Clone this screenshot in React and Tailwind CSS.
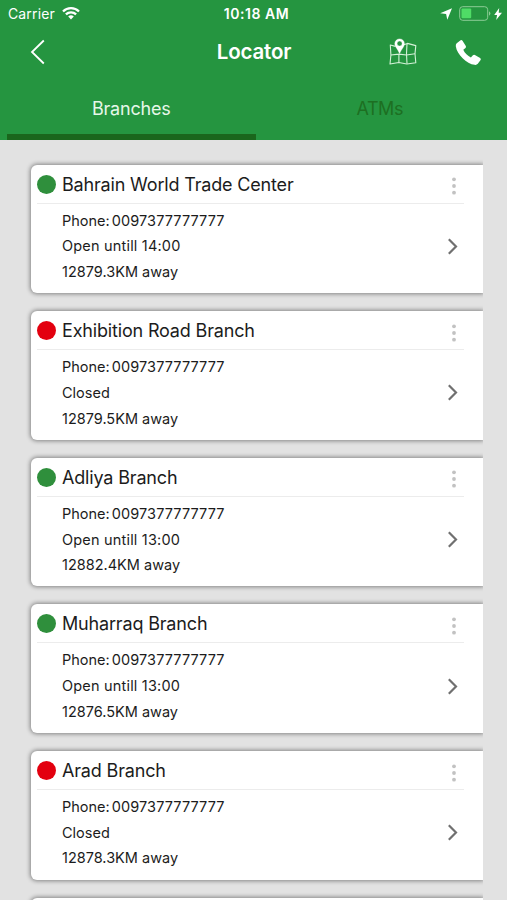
import React from 'react';

const branches = [
    { name: 'Bahrain World Trade Center', phone: '0097377777777', status: 'Open untill 14:00', distance: '12879.3KM away', open: true },
    { name: 'Exhibition Road Branch', phone: '0097377777777', status: 'Closed', distance: '12879.5KM away', open: false },
    { name: 'Adliya Branch', phone: '0097377777777', status: 'Open untill 13:00', distance: '12882.4KM away', open: true },
    { name: 'Muharraq Branch', phone: '0097377777777', status: 'Open untill 13:00', distance: '12876.5KM away', open: true },
    { name: 'Arad Branch', phone: '0097377777777', status: 'Closed', distance: '12878.3KM away', open: false },
];

const WifiIcon = () => (
    <svg className="w-[18px] h-[13px] -mt-[2px]" viewBox="0 0 18 13" fill="none" stroke="white" strokeWidth="2.3">
        <path d="M1 4.5a11.4 11.4 0 0 1 16 0" />
        <path d="M3.9 7.4a7.2 7.2 0 0 1 10.2 0" />
        <path d="M9 12.4 6.2 9.6a4 4 0 0 1 5.6 0Z" fill="white" stroke="none" />
    </svg>
);

const MapIcon = () => (
    <svg className="w-[28px] h-[28px]" viewBox="0 0 28 28" fill="none" stroke="#d5f2d8" strokeWidth="1.1" strokeLinejoin="round">
        <path d="M6.500 8.400 1.300 7l.6 10-.9 9 8.800-1.500 8 1.500 9-1.200-.8-9 .8-8.200-8.400-2.200-3.600 1.300" />
        <path d="M9.900 15.500v9M18 5.800l-.5 10 .5 10M1.900 17l8-.9 7.600.9 8.500-1.200" />
        <path d="M10.600.9a4.800 4.800 0 0 0-4.800 4.800c0 3.200 3.300 5.700 4.800 9.900 1.500-4.200 4.800-6.700 4.800-9.900A4.800 4.800 0 0 0 10.600.9Zm0 2.200a2.500 2.500 0 1 1 0 5 2.500 2.500 0 0 1 0-5Z" fill="white" fillRule="evenodd" stroke="white" strokeWidth="0.4" />
    </svg>
);

const StatusBar = () => (
    <div className="grid grid-cols-3 items-center h-7 pl-[8px] pr-[5px] text-white">
        <div className="flex items-center gap-[7px]">
            <span className="text-[14px] tracking-[0.14px] -mt-px">Carrier</span>
            <WifiIcon />
        </div>
        <span className="text-center text-[14px] font-semibold tracking-[0.55px] pl-[3px] -mt-px whitespace-nowrap">10:18 AM</span>
        <div className="flex items-center justify-end -mt-px">
            <svg className="w-[12px] h-[12px] mr-[7px]" viewBox="0 0 12 12" fill="white">
                <path d="M12 .3 7.300 11.700 6.100 6.100.2 5.300Z" />
            </svg>
            <svg className="w-[32px] h-[15px] mr-[3px]" viewBox="0 0 32 15" fill="none">
                <rect x="0.7" y="0.7" width="28" height="13.6" rx="3" stroke="#8dcc96" strokeWidth="1" />
                <rect x="2.5" y="2.6" width="9.7" height="9.6" rx="1" fill="#4fdc66" />
                <path d="M30 5.2a2.600 2.600 0 0 1 0 4.600Z" fill="#8dcc96" />
            </svg>
            <svg className="w-[8px] h-[12px]" viewBox="0 0 8 12" fill="white">
                <path d="M5.200 0 .2 6.900h2.900L2.200 12 8 4.700H4.700Z" />
            </svg>
        </div>
    </div>
);

const Header = () => (
    <header className="h-[140px] bg-[#259540] flex flex-col">
        <StatusBar />
        <div className="grid grid-cols-3 items-center h-[48px] pl-[30px] pr-[25px] text-white">
            <svg className="w-[15px] h-[26px]" viewBox="0 0 15 26" fill="none" stroke="white" strokeWidth="1.8">
                <path d="M13.8 1.500 2 13l11.800 11.500" />
            </svg>
            <h1 className="text-center text-[20.5px] font-semibold tracking-[-0.15px] pr-[4px]">Locator</h1>
            <div className="flex items-center justify-end gap-[38px]">
                <MapIcon />
                <svg className="w-[27px] h-[27px]" viewBox="0 0 27 27" fill="white">
                    <path d="M1.700 4.200 5.600 1.300Q6.700.7 7.500 1.700l3.300 5.200q.6 1.100-.3 2l-2.200 1.900c1.400 3.300 4.400 6.200 7.600 7.700l2-2.300q.9-.9 2-.3l5.200 3.200q1.200.8.500 2l-2.800 3.700q-1.300 1.400-3.200 1C11.800 25 1.900 15.500.8 7.200q-.2-1.900.9-3Z" />
                </svg>
            </div>
        </div>
        <nav className="grid grid-cols-2 flex-1 px-[7px] text-[18px] text-center">
            <div className="flex flex-col justify-between pt-[19px] text-[#e6f7e8]">
                <span className="leading-[27px] pl-[2px] tracking-[-0.2px]">Branches</span>
                <div className="h-[6px] w-[249px] bg-[#1a661c]" />
            </div>
            <div className="pt-[19px] text-[#1d6f22]">
                <span className="leading-[27px] pl-[6px] tracking-[-0.4px]">ATMs</span>
            </div>
        </nav>
    </header>
);

const BranchCard = ({ branch }) => (
    <article className="shrink-0 h-[128.6px] bg-white rounded-l-[6px] shadow-[0_0_4px_1px_rgba(0,0,0,0.42)] text-[#1c1c1c]">
        {branch && (
            <>
                <div className="flex items-center h-[39px] ml-[6px] mr-[19px] pt-px border-b border-[#ececec]">
                    <span className={`w-[19px] h-[19px] rounded-full ${branch.open ? 'bg-[#2f8f3c]' : 'bg-[#e3000f]'}`} />
                    <h2 className="flex-1 ml-[6px] text-[18px] tracking-[-0.17px] whitespace-nowrap">{branch.name}</h2>
                    <svg className="w-[4px] h-[18px] mr-[8px] mt-[4px]" viewBox="0 0 4 18" fill="#c2c2c2">
                        <circle cx="2" cy="2.3" r="1.9" />
                        <circle cx="2" cy="9" r="1.9" />
                        <circle cx="2" cy="15.7" r="1.9" />
                    </svg>
                </div>
                <div className="flex items-center justify-between pl-[31px] pr-[25px] pt-[4px]">
                    <div className="text-[14.5px] leading-[25.7px]">
                        <p className="flex gap-[2px]">
                            <span>Phone:</span>
                            <span className="tracking-[0.1px]">{branch.phone}</span>
                        </p>
                        <p className={branch.open ? 'tracking-[0.19px]' : ''}>{branch.status}</p>
                        <p>{branch.distance}</p>
                    </div>
                    <svg className="w-[11px] h-[17px]" viewBox="0 0 11 17" fill="none" stroke="#707070" strokeWidth="2.2">
                        <path d="M1.8 1.2 9 8.500l-7.200 7.300" />
                    </svg>
                </div>
            </>
        )}
    </article>
);

const App = () => (
    <div className="w-[507px] h-[900px] overflow-hidden flex flex-col bg-[#e2e2e2] font-['Inter',sans-serif]">
        <Header />
        <main className="flex-1 min-h-0 w-[483px] overflow-hidden flex flex-col gap-[18px] pl-[31px] pt-[24.7px]">
            {branches.map((branch) => (
                <BranchCard key={branch.name} branch={branch} />
            ))}
            {/* next row, still loading */}
            <BranchCard />
        </main>
    </div>
);

export default App;
